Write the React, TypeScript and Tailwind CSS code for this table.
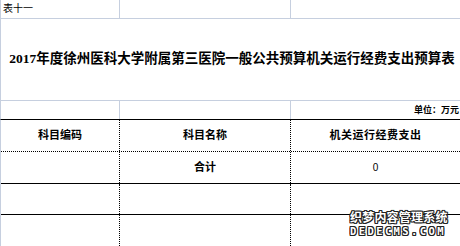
export default function App() {
  const light = "border-[#c6cfdf]";
  return (
    <main className="relative h-[246px] w-[460px] overflow-hidden bg-white font-['Liberation_Sans','Noto_Sans_CJK_SC',sans-serif] text-black">
      {/* sheet caption row */}
      <div className={`grid h-[19px] grid-cols-[118px_171px_170px] border-b border-l ${light}`}>
        <div className="pl-[2px] text-[10px] leading-[18px]">表十一</div>
        <div className={`border-l ${light}`} />
        <div className={`border-l ${light}`} />
      </div>

      {/* title */}
      <div className={`flex h-[82px] items-center justify-center border-b border-l pl-[3px] ${light}`}>
        <h1 className="whitespace-nowrap font-['Liberation_Serif','Noto_Sans_CJK_SC',serif] text-[13.5px] font-bold">
          2017年度徐州医科大学附属第三医院一般公共预算机关运行经费支出预算表
        </h1>
      </div>

      {/* unit row */}
      <div className={`grid h-[19px] grid-cols-[118px_171px_170px] border-b border-l border-b-black ${light}`}>
        <div />
        <div className={`border-l ${light}`} />
        <div className={`border-l ${light} pr-[1px] text-right text-[9px] font-bold leading-[18px]`}>单位：万元</div>
      </div>

      {/* table */}
      <div className={`border-l ${light}`}>
        <div className="grid h-[32px] grid-cols-[118px_171px_170px] border-b border-dotted border-black text-[11px] font-bold">
          <div className="flex items-center justify-center">科目编码</div>
          <div className="flex items-center justify-center border-l border-dotted border-black">科目名称</div>
          <div className="flex items-center justify-center border-l border-dotted border-black tracking-[0.5px]">机关运行经费支出</div>
        </div>
        <div className="grid h-[32px] grid-cols-[118px_171px_170px] border-b border-black text-[11px]">
          <div />
          <div className="flex items-center justify-center border-l border-dotted border-black font-bold">合计</div>
          <div className="flex items-center justify-center border-l border-dotted border-black text-[10px]">0</div>
        </div>
        <div className="grid h-[31px] grid-cols-[118px_171px_170px] border-b border-black">
          <div />
          <div className="border-l border-dotted border-black" />
          <div className="border-l border-dotted border-black" />
        </div>
        <div className="grid h-[32px] grid-cols-[118px_171px_170px] border-b border-dotted border-black">
          <div />
          <div className="border-l border-dotted border-black" />
          <div className="border-l border-dotted border-black" />
        </div>
      </div>

      {/* site stamp */}
      <div className="absolute left-[350px] top-[211px] text-white [text-shadow:1px_0_#222,-1px_0_#222,0_1px_#222,0_-1px_#222,1px_1px_#222,-1px_-1px_#222,1px_-1px_#222,-1px_1px_#222]">
        <div className="text-[12px] font-bold leading-[15px] tracking-[0.2px]">织梦内容管理系统</div>
        <div className="font-['DejaVu_Sans_Mono',monospace] text-[10.5px] font-bold leading-[11px] tracking-[2.4px]">DEDECMS.COM</div>
      </div>
    </main>
  );
}
